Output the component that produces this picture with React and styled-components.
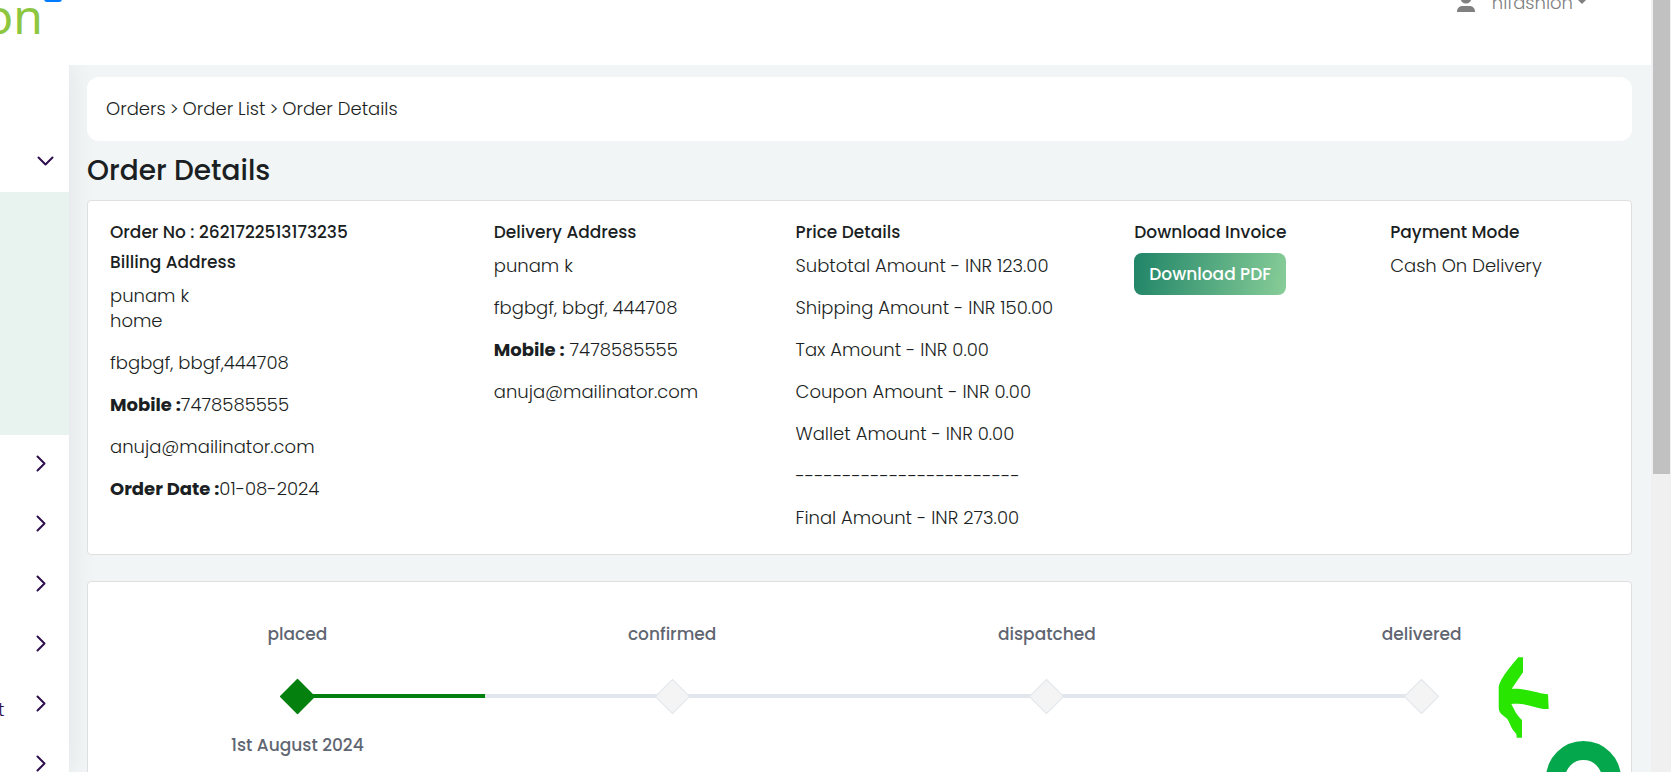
import React from "react";
import styled, { createGlobalStyle } from "styled-components";

const GlobalStyle = createGlobalStyle`
  *, *::before, *::after { box-sizing: border-box; }
  body {
    margin: 0;
    font-family: Poppins, Inter, "Liberation Sans", sans-serif;
    font-size: 18px;
    font-weight: 300;
    line-height: 25px;
    color: #1b1f23;
    background: #f1f5f6;
  }
  h1, h2, p, ul, ol { margin: 0; padding: 0; }
  b { font-weight: 700; }
  button { font: inherit; border: 0; padding: 0; background: none; cursor: pointer; }
`;

const Window = styled.div`
  display: flex;
  height: 100vh;
  overflow: hidden;
`;

const Page = styled.div`
  flex: 1;
  min-width: 0;
  display: flex;
  flex-direction: column;
`;

const Header = styled.header`
  position: relative;
  flex: none;
  display: flex;
  justify-content: space-between;
  height: 65px;
  overflow: hidden;
  background: #fff;
`;

const Brand = styled.div`
  display: flex;
  align-items: flex-start;
`;

const LogoLink = styled.a`
  display: flex;
  justify-content: flex-end;
  width: 43px;
  margin-top: -16px;
  font: 400 48px/64px "Noto Sans", sans-serif;
  color: #8dc63f;
  text-decoration: none;
`;

const MenuToggle = styled.button`
  width: 18px;
  height: 32px;
  margin: -30px 0 0 1px;
  border-radius: 3px;
  background: #007bff;
`;

const UserButton = styled.button`
  display: flex;
  align-items: center;
  height: 26px;
  margin: -11px 64px 0 0;
  color: #808080;
`;

const UserIcon = styled.svg`
  width: 18px;
  height: 20px;
  margin-right: 17px;
`;

const Caret = styled.span`
  margin: -2px 0 0 4px;
  border: 5px solid transparent;
  border-top-color: currentColor;
  border-bottom: 0;
`;

const Body = styled.div`
  flex: 1;
  min-height: 0;
  display: flex;
`;

const Sidebar = styled.nav`
  flex: none;
  width: 69px;
  padding-top: 65px;
  background: #fff;
  box-shadow: 0 0 30px rgba(0, 0, 0, 0.08);
  color: #2f0f4d;
  overflow: hidden;
`;

const MenuItem = styled.button`
  display: flex;
  justify-content: space-between;
  align-items: center;
  width: 100%;
  height: ${(p) => (p.$open ? 62 : 56)}px;
  margin-bottom: ${(p) => (p.$open ? 0 : 4)}px;
  padding-right: ${(p) => (p.$open ? 15 : 22)}px;
  color: inherit;
`;

const MenuLabel = styled.span`
  padding-top: 12px;
  margin-left: -2px;
`;

const SubMenu = styled.div`
  height: 243px;
  background: #e8f2ee;
`;

const Chevron = styled.svg`
  flex: none;
  width: ${(p) => (p.$down ? 17 : 11)}px;
  height: ${(p) => (p.$down ? 11 : 17)}px;
  fill: none;
  stroke: currentColor;
  stroke-width: 2;
  stroke-linecap: round;
  stroke-linejoin: round;
`;

const Main = styled.main`
  flex: 1;
  min-width: 0;
  padding: 12px 19px 0 18px;
`;

const Breadcrumb = styled.nav`
  display: flex;
  align-items: center;
  gap: 4px;
  height: 64px;
  padding: 0 19px 2px;
  border-radius: 12px;
  background: #fff;
`;

const Crumb = styled.a`
  color: inherit;
  text-decoration: none;
`;

const Title = styled.h1`
  margin: 12px 0;
  font-size: 28px;
  font-weight: 500;
  line-height: 35px;
`;

const Card = styled.section`
  border: 1px solid #dfdfdf;
  border-radius: 4px;
  background: #fff;
`;

const DetailsCard = styled(Card)`
  display: grid;
  grid-template-columns: 384fr 302fr 339fr 256fr 219fr;
  padding: 20px 22px 24px;
  margin-bottom: 26px;
`;

const SubHeading = styled.h2`
  margin-bottom: 10px;
  font-size: 17px;
  font-weight: 500;
  line-height: 22px;
`;

const Headings = styled.div`
  display: flex;
  flex-direction: column;
  gap: 8px;
  margin-bottom: 10px;

  ${SubHeading} { margin-bottom: 0; }
`;

const Lines = styled.div`
  display: flex;
  flex-direction: column;
  gap: 17px;
`;

const Line = styled.p`
  white-space: pre-line;
`;

const PdfButton = styled.button`
  height: 42px;
  padding: 0 15px;
  border-radius: 8px;
  background: linear-gradient(100deg, #1f8467, #88cd98);
  color: #fff;
  font-size: 17px;
  font-weight: 500;
`;

const TrackCard = styled(Card)`
  position: relative;
  padding: 40px 22px 60px;
`;

const Steps = styled.ol`
  display: flex;
  list-style: none;
`;

const Step = styled.li`
  flex: 1;
  text-align: center;
  font-size: 17px;
  font-weight: 500;
  color: #5f6672;
`;

const Rail = styled.div`
  display: flex;
  align-items: center;
  justify-content: center;
  height: 34px;
  margin: 32px 0 20px;
`;

const Segment = styled.span`
  flex: 1;
  height: 4px;
  background: ${(p) => (p.$hidden ? "transparent" : p.$done ? "#04800f" : "#e2e6ed")};
`;

const Diamond = styled.span`
  flex: none;
  width: 25px;
  height: 25px;
  margin: 0 -2px;
  transform: rotate(45deg);
  border: 1px solid ${(p) => (p.$done ? "#04800f" : "#e2e6ea")};
  background: ${(p) => (p.$done ? "#04800f" : "#f4f4f4")};
`;

const Arrow = styled.svg`
  position: absolute;
  top: 75px;
  right: 82px;
  width: 51px;
  height: 81px;
  fill: #28e600;
`;

const ChatButton = styled.button`
  position: fixed;
  right: 50px;
  bottom: -44px;
  width: 75px;
  height: 75px;
  border: 19px solid #05a74d;
  border-radius: 50%;
  background: #fff;
`;

const ScrollTrack = styled.div`
  flex: none;
  width: 20px;
  padding: 0 1px 0 2px;
  background: #f0f0f0;
`;

const ScrollThumb = styled.div`
  height: 61.4%;
  background: #c1c1c1;
`;

const ChevronDown = () => (
  <Chevron $down viewBox="0 0 17 11" aria-hidden="true"><path d="M1.5 1.5l7 7 7-7" /></Chevron>
);
const ChevronRight = () => (
  <Chevron viewBox="0 0 11 17" aria-hidden="true"><path d="M1.5 1.5l7 7-7 7" /></Chevron>
);

const menu = ["", "", "", "", "t", ""];

const price = [
  "Subtotal Amount - INR 123.00",
  "Shipping Amount - INR 150.00",
  "Tax Amount - INR 0.00",
  "Coupon Amount - INR 0.00",
  "Wallet Amount - INR 0.00",
  "------------------------",
  "Final Amount - INR 273.00",
];

const steps = [
  { name: "placed", done: true, date: "1st August 2024" },
  { name: "confirmed" },
  { name: "dispatched" },
  { name: "delivered" },
];

export default function App() {
  return (
    <>
      <GlobalStyle />
      <Window>
        <Page>
          <Header>
            <Brand>
              <LogoLink href="#">on</LogoLink>
              <MenuToggle aria-label="Toggle menu" />
            </Brand>
            <UserButton>
              <UserIcon viewBox="0 0 18 20" fill="currentColor" aria-hidden="true">
                <circle cx="9" cy="6" r="5.5" />
                <path d="M0 20v-.5c0-3.500 2.500-5.500 6-5.500h6c3.500 0 6 2 6 5.500v.5z" />
              </UserIcon>
              hifashion
              <Caret />
            </UserButton>
          </Header>
          <Body>
            <Sidebar>
              <MenuItem $open aria-label="Orders menu">
                <span />
                <ChevronDown />
              </MenuItem>
              <SubMenu />
              {menu.map((label, i) => (
                <MenuItem key={i} aria-label="Menu section">
                  <MenuLabel>{label}</MenuLabel>
                  <ChevronRight />
                </MenuItem>
              ))}
            </Sidebar>
            <Main>
              <Breadcrumb>
                <Crumb href="#">Orders</Crumb>
                <span>&gt;</span>
                <Crumb href="#">Order List</Crumb>
                <span>&gt;</span>
                <span>Order Details</span>
              </Breadcrumb>
              <Title>Order Details</Title>
              <DetailsCard>
                <div>
                  <Headings>
                    <SubHeading>Order No : 2621722513173235</SubHeading>
                    <SubHeading>Billing Address</SubHeading>
                  </Headings>
                  <Lines>
                    <Line>{"punam k\nhome"}</Line>
                    <Line>fbgbgf, bbgf,444708</Line>
                    <Line><b>Mobile :</b>7478585555</Line>
                    <Line>anuja@mailinator.com</Line>
                    <Line><b>Order Date :</b>01-08-2024</Line>
                  </Lines>
                </div>
                <div>
                  <SubHeading>Delivery Address</SubHeading>
                  <Lines>
                    <Line>punam k</Line>
                    <Line>fbgbgf, bbgf, 444708</Line>
                    <Line><b>Mobile :</b> 7478585555</Line>
                    <Line>anuja@mailinator.com</Line>
                  </Lines>
                </div>
                <div>
                  <SubHeading>Price Details</SubHeading>
                  <Lines>{price.map((t) => <Line key={t}>{t}</Line>)}</Lines>
                </div>
                <div>
                  <SubHeading>Download Invoice</SubHeading>
                  <PdfButton>Download PDF</PdfButton>
                </div>
                <div>
                  <SubHeading>Payment Mode</SubHeading>
                  <Lines><Line>Cash On Delivery</Line></Lines>
                </div>
              </DetailsCard>
              <TrackCard>
                <Steps>
                  {steps.map((s, i) => (
                    <Step key={s.name}>
                      <p>{s.name}</p>
                      <Rail>
                        <Segment $hidden={i === 0} />
                        <Diamond $done={s.done} />
                        <Segment $done={s.done} $hidden={i === steps.length - 1} />
                      </Rail>
                      <p>{s.date}</p>
                    </Step>
                  ))}
                </Steps>
                <Arrow viewBox="0 0 51 81" aria-hidden="true">
                  <path d="M20.300 .3H25V15.300L13.700 31.700C28 31 38 36 50 37.300L50.700 52H45.300C35 50 27 46 13.300 47C17 54 18 57 24 63V80.700H18.700L18.300 77C12 70 12.500 67 9.300 62C6 58.500 1 57 .7 50.700V31.300C1 25 6 17 20.300 .3Z" />
                </Arrow>
              </TrackCard>
            </Main>
          </Body>
        </Page>
        <ScrollTrack><ScrollThumb /></ScrollTrack>
      </Window>
      <ChatButton aria-label="Open chat" />
    </>
  );
}
